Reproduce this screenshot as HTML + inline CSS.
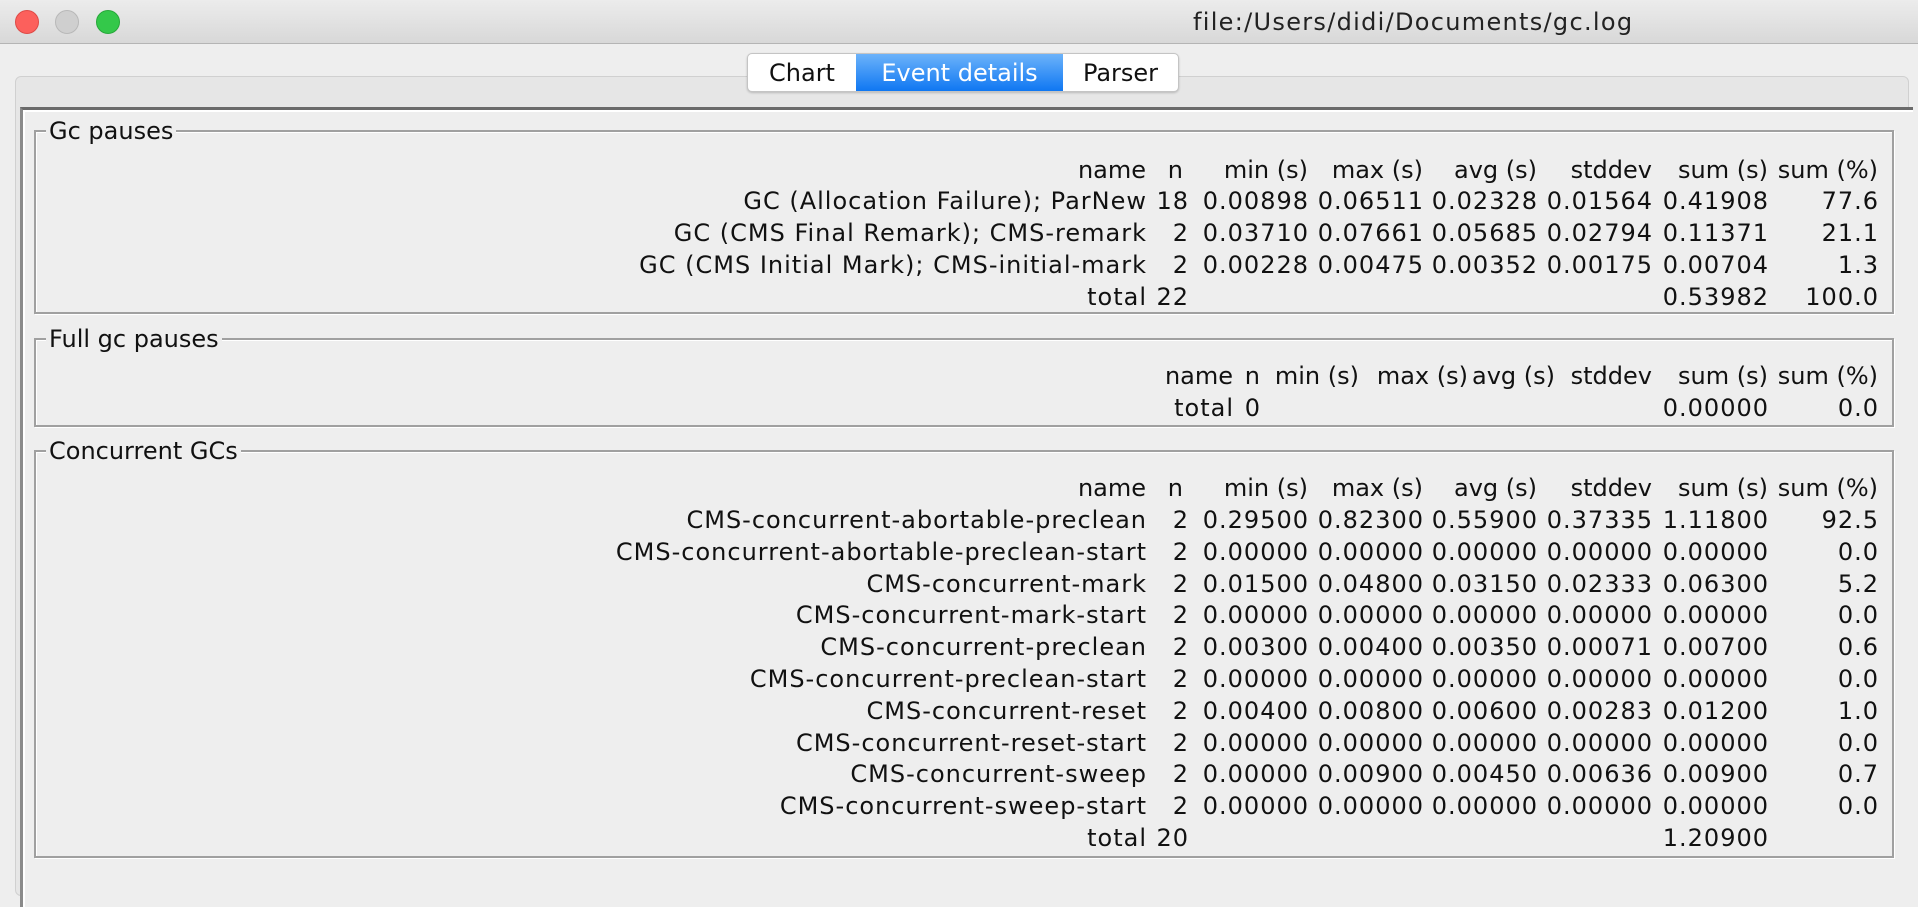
<!DOCTYPE html>
<html><head><meta charset="utf-8"><style>
*{margin:0;padding:0;box-sizing:border-box}
body{width:1918px;height:888px;background:#eeeeee;font-family:"DejaVu Sans","Liberation Sans",sans-serif;font-size:24px;color:#111;position:relative;overflow:hidden}
.tb{position:absolute;left:0;top:0;width:1918px;height:44px;background:linear-gradient(#ececec,#d8d8d8);border-bottom:1px solid #b4b4b4}
.dot{position:absolute;top:10px;width:24px;height:24px;border-radius:50%}
.title{position:absolute;left:1193px;top:8px;font-size:24px;letter-spacing:1.3px;color:#222}
.panel{position:absolute;left:15px;top:76px;width:1894px;height:820px;background:#e6e6e6;border:1px solid #d0d0d0;border-radius:6px}
.inner{position:absolute;left:20px;top:107px;width:1893px;height:800px;background:#eeeeee;border-left:3px solid #8a8a8a;border-top:3px solid #6a6a6a;box-shadow:inset 2px 2px 0 #fff}
.tabs{position:absolute;left:747px;top:53px;height:39px;display:flex;border:1px solid #c4c4c4;border-radius:5px;background:#fff;overflow:hidden;box-shadow:0 1px 2px rgba(0,0,0,.2)}
.tab{height:37px;line-height:39px;text-align:center;font-size:24px;white-space:nowrap}
.grp{position:absolute;left:34px;width:1860px;border:2px solid #a0a0a0;box-shadow:inset 1px 1px 0 #fff,1px 1px 0 #fff}
.gt{position:absolute;left:46px;background:#eeeeee;padding:0 3px;font-size:24px;line-height:28px}
.r{position:absolute;left:0;width:1918px;height:32px;line-height:32px;letter-spacing:1px}
.r.h{letter-spacing:0}
.r span{position:absolute;white-space:nowrap}
</style></head><body>
<div class="tb">
<div class="dot" style="left:15px;background:#fc605c;border:1px solid #de4a46"></div>
<div class="dot" style="left:55px;background:#cfcfcf;border:1px solid #b8b8b8"></div>
<div class="dot" style="left:96px;background:#34c84a;border:1px solid #27a83a"></div>
<div class="title">file:/Users/didi/Documents/gc.log</div>
</div>
<div class="panel"></div>
<div class="inner"></div>
<div class="tabs">
<div class="tab" style="width:108px">Chart</div>
<div class="tab" style="width:207px;background:linear-gradient(#6cb3fa,#0f77f2);color:#fff">Event details</div>
<div class="tab" style="width:115px">Parser</div>
</div>

<div class="grp" style="top:130px;height:184px"></div>
<div class="gt" style="top:117px">Gc pauses</div>
<div class="grp" style="top:338px;height:89px"></div>
<div class="gt" style="top:325px">Full gc pauses</div>
<div class="grp" style="top:450px;height:408px"></div>
<div class="gt" style="top:437px">Concurrent GCs</div>

<div id="rows">
<div class="r h" style="top:154px"><span style="right:772px">name</span><span style="right:735px">n</span><span style="right:610px">min (s)</span><span style="right:495px">max (s)</span><span style="right:381px">avg (s)</span><span style="right:266px">stddev</span><span style="right:150px">sum (s)</span><span style="right:40px">sum (%)</span></div>
<div class="r" style="top:185px"><span style="right:771px">GC (Allocation Failure); ParNew</span><span style="right:729px">18</span><span style="right:609px">0.00898</span><span style="right:494px">0.06511</span><span style="right:380px">0.02328</span><span style="right:265px">0.01564</span><span style="right:149px">0.41908</span><span style="right:39px">77.6</span></div>
<div class="r" style="top:217px"><span style="right:771px">GC (CMS Final Remark); CMS-remark</span><span style="right:729px">2</span><span style="right:609px">0.03710</span><span style="right:494px">0.07661</span><span style="right:380px">0.05685</span><span style="right:265px">0.02794</span><span style="right:149px">0.11371</span><span style="right:39px">21.1</span></div>
<div class="r" style="top:249px"><span style="right:771px">GC (CMS Initial Mark); CMS-initial-mark</span><span style="right:729px">2</span><span style="right:609px">0.00228</span><span style="right:494px">0.00475</span><span style="right:380px">0.00352</span><span style="right:265px">0.00175</span><span style="right:149px">0.00704</span><span style="right:39px">1.3</span></div>
<div class="r" style="top:281px"><span style="right:771px">total</span><span style="right:729px">22</span><span style="right:149px">0.53982</span><span style="right:39px">100.0</span></div>
<div class="r h" style="top:360px"><span style="right:685px">name</span><span style="right:658px">n</span><span style="right:559px">min (s)</span><span style="right:450px">max (s)</span><span style="right:363px">avg (s)</span><span style="right:266px">stddev</span><span style="right:150px">sum (s)</span><span style="right:40px">sum (%)</span></div>
<div class="r" style="top:392px"><span style="right:684px">total</span><span style="right:657px">0</span><span style="right:149px">0.00000</span><span style="right:39px">0.0</span></div>
<div class="r h" style="top:472px"><span style="right:772px">name</span><span style="right:735px">n</span><span style="right:610px">min (s)</span><span style="right:495px">max (s)</span><span style="right:381px">avg (s)</span><span style="right:266px">stddev</span><span style="right:150px">sum (s)</span><span style="right:40px">sum (%)</span></div>
<div class="r" style="top:504px"><span style="right:771px">CMS-concurrent-abortable-preclean</span><span style="right:729px">2</span><span style="right:609px">0.29500</span><span style="right:494px">0.82300</span><span style="right:380px">0.55900</span><span style="right:265px">0.37335</span><span style="right:149px">1.11800</span><span style="right:39px">92.5</span></div>
<div class="r" style="top:536px"><span style="right:771px">CMS-concurrent-abortable-preclean-start</span><span style="right:729px">2</span><span style="right:609px">0.00000</span><span style="right:494px">0.00000</span><span style="right:380px">0.00000</span><span style="right:265px">0.00000</span><span style="right:149px">0.00000</span><span style="right:39px">0.0</span></div>
<div class="r" style="top:568px"><span style="right:771px">CMS-concurrent-mark</span><span style="right:729px">2</span><span style="right:609px">0.01500</span><span style="right:494px">0.04800</span><span style="right:380px">0.03150</span><span style="right:265px">0.02333</span><span style="right:149px">0.06300</span><span style="right:39px">5.2</span></div>
<div class="r" style="top:599px"><span style="right:771px">CMS-concurrent-mark-start</span><span style="right:729px">2</span><span style="right:609px">0.00000</span><span style="right:494px">0.00000</span><span style="right:380px">0.00000</span><span style="right:265px">0.00000</span><span style="right:149px">0.00000</span><span style="right:39px">0.0</span></div>
<div class="r" style="top:631px"><span style="right:771px">CMS-concurrent-preclean</span><span style="right:729px">2</span><span style="right:609px">0.00300</span><span style="right:494px">0.00400</span><span style="right:380px">0.00350</span><span style="right:265px">0.00071</span><span style="right:149px">0.00700</span><span style="right:39px">0.6</span></div>
<div class="r" style="top:663px"><span style="right:771px">CMS-concurrent-preclean-start</span><span style="right:729px">2</span><span style="right:609px">0.00000</span><span style="right:494px">0.00000</span><span style="right:380px">0.00000</span><span style="right:265px">0.00000</span><span style="right:149px">0.00000</span><span style="right:39px">0.0</span></div>
<div class="r" style="top:695px"><span style="right:771px">CMS-concurrent-reset</span><span style="right:729px">2</span><span style="right:609px">0.00400</span><span style="right:494px">0.00800</span><span style="right:380px">0.00600</span><span style="right:265px">0.00283</span><span style="right:149px">0.01200</span><span style="right:39px">1.0</span></div>
<div class="r" style="top:727px"><span style="right:771px">CMS-concurrent-reset-start</span><span style="right:729px">2</span><span style="right:609px">0.00000</span><span style="right:494px">0.00000</span><span style="right:380px">0.00000</span><span style="right:265px">0.00000</span><span style="right:149px">0.00000</span><span style="right:39px">0.0</span></div>
<div class="r" style="top:758px"><span style="right:771px">CMS-concurrent-sweep</span><span style="right:729px">2</span><span style="right:609px">0.00000</span><span style="right:494px">0.00900</span><span style="right:380px">0.00450</span><span style="right:265px">0.00636</span><span style="right:149px">0.00900</span><span style="right:39px">0.7</span></div>
<div class="r" style="top:790px"><span style="right:771px">CMS-concurrent-sweep-start</span><span style="right:729px">2</span><span style="right:609px">0.00000</span><span style="right:494px">0.00000</span><span style="right:380px">0.00000</span><span style="right:265px">0.00000</span><span style="right:149px">0.00000</span><span style="right:39px">0.0</span></div>
<div class="r" style="top:822px"><span style="right:771px">total</span><span style="right:729px">20</span><span style="right:149px">1.20900</span></div>
</div>
</body></html>
